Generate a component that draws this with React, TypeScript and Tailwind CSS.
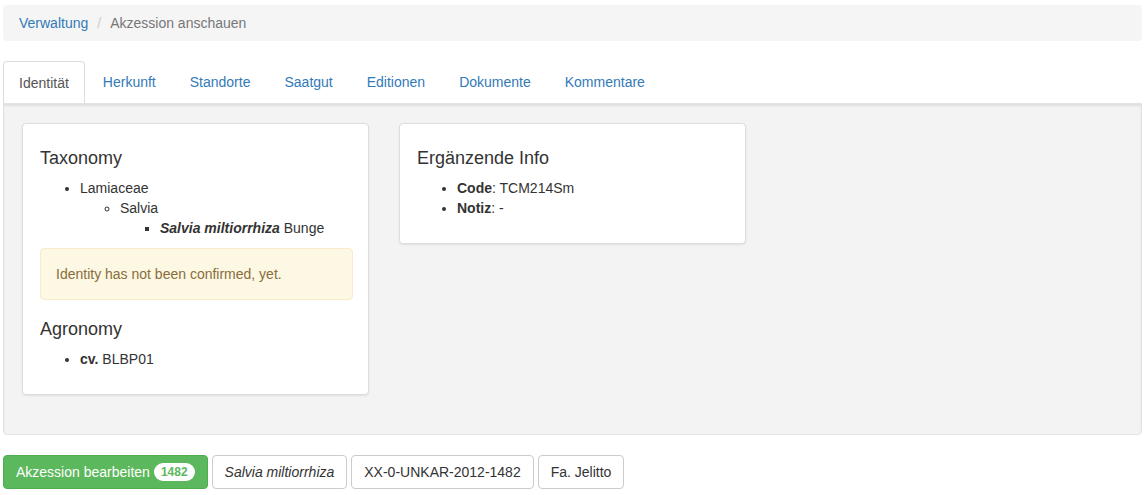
const tabs = ['Identität', 'Herkunft', 'Standorte', 'Saatgut', 'Editionen', 'Dokumente', 'Kommentare'];

function Card({ title, children, className = '' }: { title: string; children: React.ReactNode; className?: string }) {
	return (
		<div className={`bg-white border border-[#dddddd] rounded-[4px] shadow-[0_1px_2px_rgba(0,0,0,0.08)] pl-[17px] pr-[15px] pt-[15px] pb-[15px] ${className}`}>
			<h4 className="text-[18px] leading-[20px] mt-[9px] mb-[10px] text-[#333]">{title}</h4>
			{children}
		</div>
	);
}

export default function App() {
	return (
		<div className="bg-white min-h-[495px] text-[14px] leading-[20px] text-[#333] font-['Liberation_Sans',Arial,sans-serif] ml-[3px] mr-[5px] pt-[5px]">
			<div className="h-[36px] bg-[#f5f5f5] rounded-[4px] flex items-center px-[16px] gap-[9px]">
				<span className="text-[#337ab7]">Verwaltung</span>
				<span className="text-[#cccccc]">/</span>
				<span className="text-[#777777]">Akzession anschauen</span>
			</div>

			<div className="mt-[20px] flex h-[42px]">
				{tabs.map((t, i) =>
					i === 0 ? (
						<div key={t} className="mr-[2px] px-[15px] flex items-center border border-b-0 border-[#dddddd] rounded-t-[4px] bg-white text-[#555555]">
							{t}
						</div>
					) : (
						<div key={t} className="mr-[2px] px-[16px] flex items-center text-[#337ab7]">
							{t}
						</div>
					),
				)}
			</div>

			<div className="h-[332px] bg-[#f3f3f3] border border-[#e3e3e3] rounded-b-[4px] shadow-[inset_0_2px_2px_rgba(0,0,0,0.08)] pt-[19px] pl-[18px] pr-[19px] flex items-start gap-[30px]">
				<Card title="Taxonomy" className="w-[347px]">
					<ul className="list-disc pl-[40px] mb-[10px]">
						<li>
							Lamiaceae
							<ul className="list-[circle] pl-[40px]">
								<li>
									Salvia
									<ul className="list-[square] pl-[40px]">
										<li>
											<b className="italic">Salvia miltiorrhiza</b> Bunge
										</li>
									</ul>
								</li>
							</ul>
						</li>
					</ul>
					<div className="bg-[#fcf8e3] border border-[#faebcc] text-[#8a6d3b] rounded-[4px] p-[15px]">
						Identity has not been confirmed, yet.
					</div>
					<h4 className="text-[18px] leading-[20px] mt-[19px] mb-[10px] text-[#333]">Agronomy</h4>
					<ul className="list-disc pl-[40px] mb-[10px]">
						<li>
							<b>cv.</b> BLBP01
						</li>
					</ul>
				</Card>
				<Card title="Ergänzende Info" className="w-[347px]">
					<ul className="list-disc pl-[40px] mb-[10px]">
						<li>
							<b>Code</b>: TCM214Sm
						</li>
						<li>
							<b>Notiz</b>: -
						</li>
					</ul>
				</Card>
			</div>

			<div className="mt-[20px] flex gap-[4px]">
				<div className="h-[34px] px-[12px] flex items-center gap-[4px] bg-[#5cb85c] border border-[#4cae4c] rounded-[4px] text-white">
					Akzession bearbeiten
					<span className="bg-white text-[#5cb85c] rounded-[10px] text-[12px] leading-[12px] font-bold px-[7px] py-[3px]">1482</span>
				</div>
				<div className="h-[34px] px-[12px] flex items-center bg-white border border-[#cccccc] rounded-[4px] italic">
					Salvia miltiorrhiza
				</div>
				<div className="h-[34px] px-[12px] flex items-center bg-white border border-[#cccccc] rounded-[4px]">
					XX-0-UNKAR-2012-1482
				</div>
				<div className="h-[34px] px-[12px] flex items-center bg-white border border-[#cccccc] rounded-[4px]">
					Fa. Jelitto
				</div>
			</div>
		</div>
	);
}
